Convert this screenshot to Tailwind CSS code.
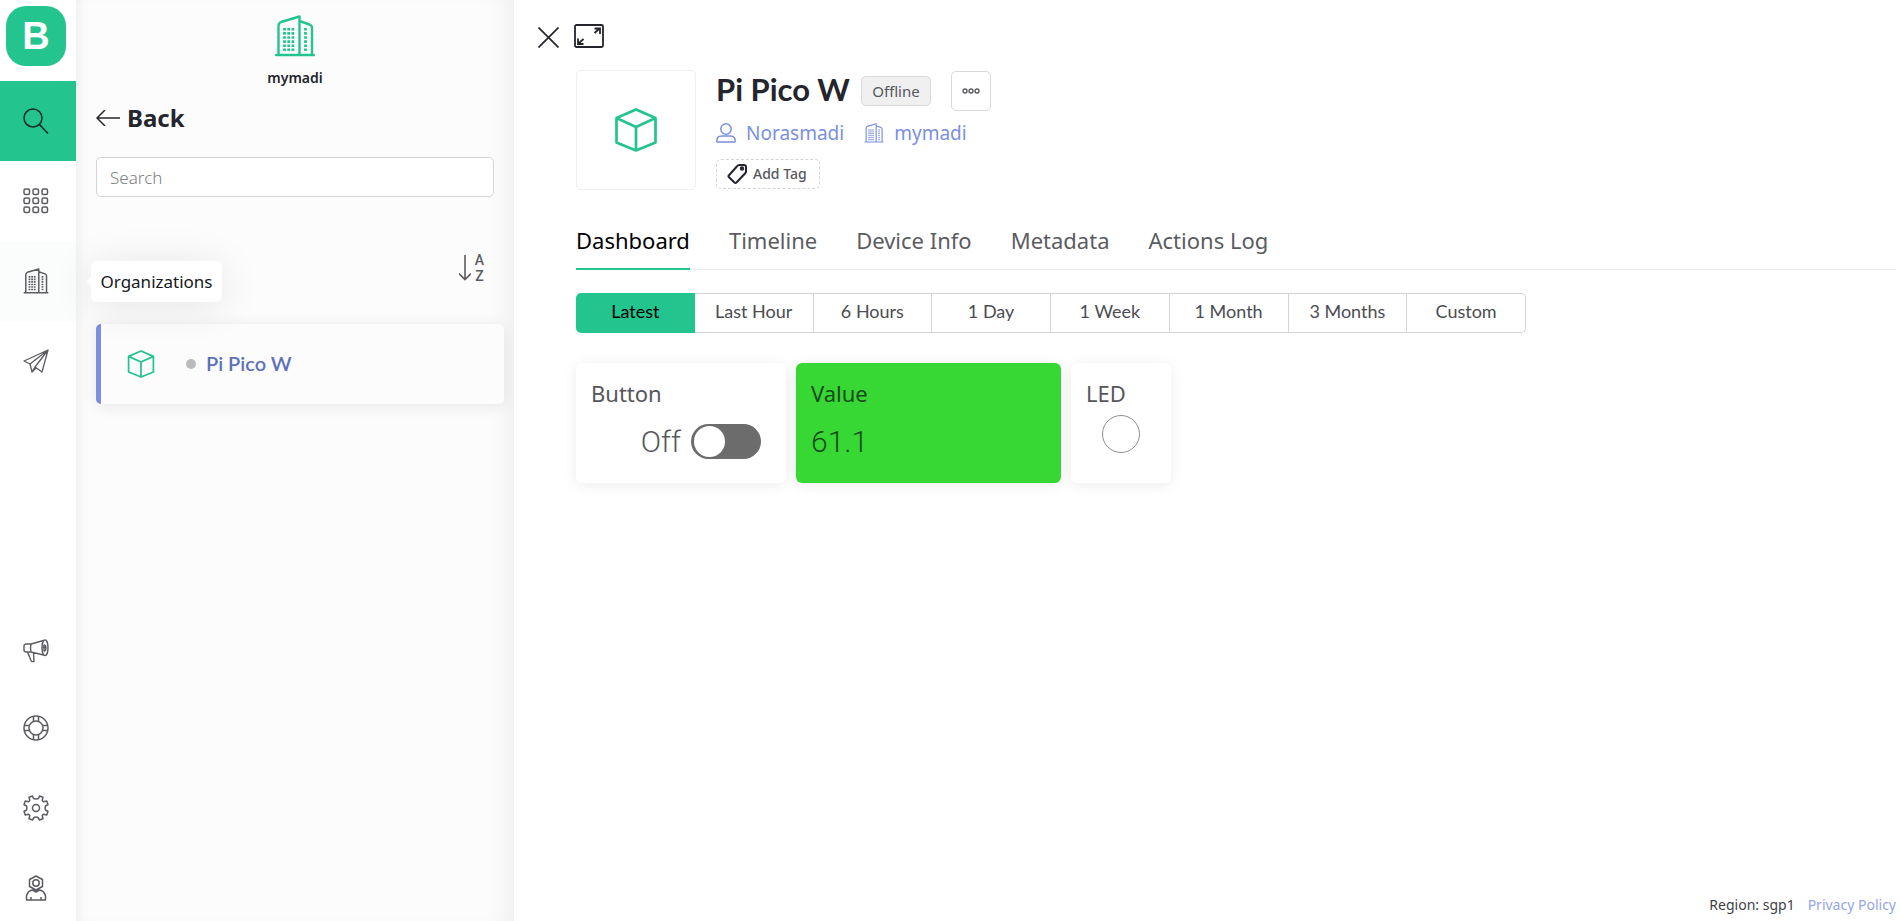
<!DOCTYPE html>
<html lang="en">
<head>
<meta charset="utf-8">
<title>Pi Pico W</title>
<script src="https://cdn.jsdelivr.net/npm/@tailwindcss/browser@4"></script>
</head>
<body class="bg-white font-['Noto_Sans',sans-serif] text-[#24252d]">
<svg class="hidden">
  <symbol id="cube" viewBox="0 0 42 44"><path d="M21 1.500 40.500 10v24.500L21 42.500 1.500 34.500V10ZM1.500 10 21 19l19.500-9M21 19v23.500" fill="none" stroke="currentColor" stroke-width="2.700" stroke-linejoin="round"/></symbol>
  <symbol id="building" viewBox="0 0 40 42"><path d="M3.500 40V11q0-3 2.500-4L24.500 1.500V40M24.500 6l10 3.500q2.500 1 2.500 3.500v27M1 40h38" fill="none" stroke="currentColor" stroke-width="2.400" stroke-linejoin="round" stroke-linecap="round"/><path d="M9.500 13v24M13.700 13v24M17.900 13v24M30.500 13v24" fill="none" stroke="currentColor" stroke-width="2.800" stroke-dasharray="2.600 1.500"/></symbol>
</svg>
<div class="flex min-h-screen">
  <nav class="relative z-10 flex w-19 shrink-0 flex-col bg-white text-[#5b5c61]" aria-label="Main">
    <a href="#" aria-label="Home" class="mt-[6px] ml-[6px] mb-[15px] flex size-[60px] items-center justify-center rounded-[20px] bg-[#24c48e] font-['Liberation_Sans',sans-serif] text-[38px] font-bold text-white">B</a>
    <a href="#" aria-label="Search" class="flex h-20 items-center bg-[#24c48e] pl-[23px] text-[#0c2b24]">
      <svg class="size-[26px]" viewBox="0 0 26 26" fill="none" stroke="currentColor" stroke-width="1.500"><circle cx="10" cy="10" r="9"/><path d="m16.500 16.500 8.500 9"/></svg>
    </a>
    <a href="#" aria-label="Templates" class="flex h-20 items-center pl-[23px]">
      <svg class="size-[26px]" viewBox="0 0 26 26" fill="none" stroke="currentColor" stroke-width="1.500"><rect x="1" y="1" width="5.500" height="5.500" rx="1.500"/><rect x="10" y="1" width="5.500" height="5.500" rx="1.500"/><rect x="19" y="1" width="5.500" height="5.500" rx="1.500"/><rect x="1" y="10" width="5.500" height="5.500" rx="1.500"/><rect x="10" y="10" width="5.500" height="5.500" rx="1.500"/><rect x="19" y="10" width="5.500" height="5.500" rx="1.500"/><rect x="1" y="19" width="5.500" height="5.500" rx="1.500"/><rect x="10" y="19" width="5.500" height="5.500" rx="1.500"/><rect x="19" y="19" width="5.500" height="5.500" rx="1.500"/></svg>
    </a>
    <a href="#" aria-label="Organizations" class="relative flex h-20 items-center bg-[#fafdfc] pl-[23px]">
      <svg class="size-[26px]"><use href="#building"/></svg>
      <span role="tooltip" class="absolute top-5 left-[91px] flex h-[41px] w-[131px] items-center justify-center rounded-md bg-white text-[17px] text-[#17181d] shadow-[0_4px_40px_rgba(0,0,0,0.10)]">Organizations<span class="absolute top-[17px] -left-[3px] size-[7px] rotate-45 bg-white"></span></span>
    </a>
    <a href="#" aria-label="Messages" class="flex h-20 items-center pl-[23px]">
      <svg class="size-[26px]" viewBox="0 0 26 26" fill="none" stroke="currentColor" stroke-width="1.300" stroke-linejoin="round"><path d="M25 2 1 13l6 3L25 2 19 24l-7-5L25 2M7 16l2 8 3-5M9 24l4-4M12 19 25 2"/></svg>
    </a>
    <div class="mt-auto flex flex-col gap-[54px] pb-5 pl-[23px]">
      <a href="#" aria-label="News" class="-mb-[3px]"><svg class="size-[26px]" viewBox="0 0 26 26" fill="none" stroke="currentColor" stroke-width="1.400" stroke-linejoin="round"><path d="M8 6 20.500 2.500M8 14l12.500 3M8 6H3.500Q1 6 1 8v4q0 2 2.500 2H8M8 6q-1 4 0 8M4.500 14 8 22.500q.5 1.500 3 1L10.500 15"/><ellipse cx="22" cy="9.700" rx="3" ry="7.800"/><path d="M21 7q2 0 2 3t-2 3ZM19.500 9.500h3"/></svg></a>
      <a href="#" aria-label="Help"><svg class="size-[26px]" viewBox="0 0 26 26" fill="none" stroke="currentColor" stroke-width="1.500"><circle cx="13" cy="13" r="12"/><circle cx="13" cy="13" r="7"/><path d="M10.500 1.500v5M15.500 1.500v5M10.500 19.500v5M15.500 19.500v5M1.500 10.500h5M1.500 15.500h5M19.500 10.500h5M19.500 15.500h5"/></svg></a>
      <a href="#" aria-label="Settings"><svg class="size-[26px]" viewBox="0 0 26 26" fill="none" stroke="currentColor" stroke-width="1.500" stroke-linejoin="round"><circle cx="13" cy="13" r="3.500"/><path d="M10.500 3.500 9.500 1 6 2.300l.8 3q-.6 1-1.500 1.500l-3-.8L1 9.500l2.500 1.500q.8 2 0 4L1 16.500 2.300 20l3-.8q1 .5 1.500 1.500l-.8 3L9.500 25l1.500-2.500q2-.8 4 0l1.500 2.500 3.500-1.300-.8-3q.5-1 1.500-1.500l3 .8 1.300-3.500-2.500-1.500q-.8-2 0-4L25 9.500 23.700 6l-3 .8q-1-.5-1.500-1.500l.8-3L16.500 1l-1 2.500q-2.500.8-5 0Z"/></svg></a>
      <a href="#" aria-label="Account"><svg class="size-[26px]" viewBox="0 0 26 26" fill="none" stroke="currentColor" stroke-width="1.500" stroke-linejoin="round"><path d="m13 1 6.500 3.500v7L13 15l-6.500-3.500v-7ZM3.500 25v-4q1-5 6-6l3.500 2 3.500-2q5 1 6 6v4ZM8 25v-3M18 25v-3"/><circle cx="13" cy="8" r="3.200"/></svg></a>
    </div>
  </nav>

  <aside class="flex w-[438px] shrink-0 flex-col bg-[#fcfcfc] pr-[10px] pl-5 shadow-[inset_12px_0_12px_-8px_rgba(0,0,0,0.05),inset_-20px_0_24px_-14px_rgba(0,0,0,0.06)]">
    <div class="flex flex-col items-center pt-[15px] pr-[10px]">
      <svg class="h-[42px] w-10 text-[#24c48e]"><use href="#building"/></svg>
      <span class="mt-[11px] text-sm leading-5 font-semibold">mymadi</span>
    </div>
    <a href="#" class="mt-[14px] flex h-8 items-center gap-[7px] text-2xl font-bold">
      <svg class="h-4 w-6" viewBox="0 0 24 16" fill="none" stroke="currentColor" stroke-width="1.500"><path d="M1 8h23M9 0 1 8l8 8"/></svg>Back
    </a>
    <input type="search" aria-label="Search" placeholder="Search" class="mt-[23px] mr-[10px] h-10 rounded-[5px] border border-[#d4d4d6] bg-white px-[13px] text-[17px] font-light placeholder:text-[#7d7e82]">
    <button type="button" aria-label="Sort A to Z" class="mt-[55px] mr-5 flex items-center gap-1 self-end text-[#5b5c61]">
      <svg class="h-[26px] w-3" viewBox="0 0 12 26" fill="none" stroke="currentColor" stroke-width="1.600"><path d="M6 0v24M0 18.500l6 6 6-6"/></svg>
      <span class="flex flex-col font-['Roboto',sans-serif] text-sm leading-4 font-medium"><span>A</span><span>Z</span></span>
    </button>
    <a href="#" class="mt-[40px] flex h-20 items-center rounded-[5px] border-l-5 border-[#7a8fe0] bg-[#fcfcfc] pl-[26px] font-['Lato',sans-serif] text-xl font-semibold text-[#5c72b8] shadow-[0_2px_16px_rgba(0,0,0,0.09)]">
      <svg class="size-7 text-[#24c48e]"><use href="#cube"/></svg>
      <span class="ml-[31px] size-[10px] rounded-full bg-[#bbbbbd]"></span>
      <span class="ml-[10px] pb-[2px]">Pi Pico W</span>
    </a>
  </aside>

  <main class="flex min-w-0 flex-1 flex-col">
    <div class="flex h-[70px] items-start gap-[15px] pt-6 pl-6">
      <button type="button" aria-label="Close" class="mt-[3px]"><svg class="size-[21px]" viewBox="0 0 21 21" fill="none" stroke="currentColor" stroke-width="1.700"><path d="m.5.5 20 20M20.500.5l-20 20"/></svg></button>
      <button type="button" aria-label="Full screen"><svg class="h-6 w-[30px]" viewBox="0 0 30 24" fill="none" stroke="currentColor" stroke-width="1.800"><rect x="1" y="1" width="28" height="22" rx="1.500"/><path d="m20.500 9 5-4.500M20.500 4.500H26V10M9.500 15l-5 4.500M4 14.500V20h5.500"/></svg></button>
    </div>
    <header class="flex gap-5 pl-[62px]">
      <div class="flex size-[120px] items-center justify-center rounded-[5px] border border-[#eeeeef] text-[#24c48e]"><svg class="h-11 w-[42px]"><use href="#cube"/></svg></div>
      <div class="flex flex-col items-start">
        <div class="flex h-[42px] items-center">
          <h1 class="pb-[3px] font-['Lato',sans-serif] text-[31px] font-bold">Pi Pico W</h1>
          <span class="ml-[11px] flex h-[30px] w-[70px] items-center justify-center rounded-[5px] border border-[#d8d8da] bg-[#f0f0f0] text-[15px] text-[#56575c]">Offline</span>
          <button type="button" aria-label="More" class="ml-5 flex size-10 items-center justify-center rounded-[5px] border border-[#d8d8da] text-[#5b5c61]"><svg class="h-[6px] w-[18px]" viewBox="0 0 18 6" fill="none" stroke="currentColor" stroke-width="1.400"><circle cx="3" cy="3" r="2"/><circle cx="9" cy="3" r="2"/><circle cx="15" cy="3" r="2"/></svg></button>
        </div>
        <div class="mt-[5px] flex h-8 items-center text-[19px] text-[#7a8fe0]">
          <a href="#" class="flex items-center gap-[10px]"><svg class="size-5" viewBox="0 0 20 20" fill="none" stroke="currentColor" stroke-width="1.500"><circle cx="10" cy="6" r="5.200"/><path d="M1 19q-1-6 5-6h8q6 0 5 6Z" stroke-linejoin="round"/></svg>Norasmadi</a>
          <a href="#" class="ml-5 flex items-center gap-[10px]"><svg class="size-5"><use href="#building"/></svg>mymadi</a>
        </div>
        <button type="button" class="mt-[10px] flex h-[30px] w-[104px] items-center gap-[6px] rounded-[5px] border border-dashed border-[#d4d4d6] pl-[10px] text-sm font-medium text-[#56575c]"><svg class="size-5 shrink-0 text-[#24252d]" viewBox="0 0 20 20" fill="none" stroke="currentColor" stroke-width="2" stroke-linejoin="round"><path d="m1.800 11.500 8-9Q11 1 12.500 1H17q2 0 2 2v4.500q0 1-1 2l-8.500 9q-1 1-2 0l-5.700-5.500q-.7-.7 0-1.500Z"/><circle cx="15" cy="4.500" r="1.200"/></svg>Add Tag</button>
      </div>
    </header>
    <nav aria-label="Device" class="mt-7 mr-1 ml-[62px] flex h-[52px] gap-[39px] border-b border-[#eaeaeb] text-[22px] text-[#5b5c61]">
      <a href="#" aria-current="page" class="-mb-px flex items-center border-b-2 border-[#24c48e] pb-[5px] text-black">Dashboard</a>
      <a href="#" class="flex items-center pb-[6px]">Timeline</a>
      <a href="#" class="flex items-center pb-[6px]">Device Info</a>
      <a href="#" class="flex items-center pb-[6px]">Metadata</a>
      <a href="#" class="flex items-center pb-[6px]">Actions Log</a>
    </nav>
    <div class="mt-[23px] ml-[62px] grid h-10 w-[950px] grid-cols-8 font-['Lato',sans-serif] text-lg text-[#4b4c51]">
      <button type="button" class="rounded-l-[5px] bg-[#24c48e] pb-1 text-black">Latest</button>
      <button type="button" class="border-y border-r border-[#d4d4d6] pb-1">Last Hour</button>
      <button type="button" class="border-y border-r border-[#d4d4d6] pb-1">6 Hours</button>
      <button type="button" class="border-y border-r border-[#d4d4d6] pb-1">1 Day</button>
      <button type="button" class="border-y border-r border-[#d4d4d6] pb-1">1 Week</button>
      <button type="button" class="border-y border-r border-[#d4d4d6] pb-1">1 Month</button>
      <button type="button" class="border-y border-r border-[#d4d4d6] pb-1">3 Months</button>
      <button type="button" class="rounded-r-[5px] border-y border-r border-[#d4d4d6] pb-1">Custom</button>
    </div>
    <section class="mt-[30px] ml-[62px] flex gap-[10px] text-[#56575c]">
      <div class="h-[120px] w-[210px] rounded-[6px] bg-white px-[15px] pt-[15px] shadow-[0_2px_14px_rgba(0,0,0,0.08)]">
        <h2 class="text-[22px] leading-[30px]">Button</h2>
        <label class="mt-4 mr-[10px] flex h-[35px] items-center justify-end gap-[10px]">
          <span class="font-['Roboto',sans-serif] text-[30px] font-light">Off</span>
          <input type="checkbox" role="switch" class="h-[35px] w-[70px] appearance-none rounded-full bg-[#6c6c6c] px-[3px] py-[2px] before:block before:size-[31px] before:rounded-full before:bg-white before:content-['']">
        </label>
      </div>
      <div class="h-[120px] w-[265px] rounded-[6px] bg-[#38d834] px-[15px] pt-[15px] text-[#174a1b] shadow-[0_2px_14px_rgba(0,0,0,0.08)]">
        <h2 class="text-[22px] leading-[30px]">Value</h2>
        <p class="mt-4 font-['Roboto',sans-serif] text-[30px] leading-[35px] font-light">61.1</p>
      </div>
      <div class="h-[120px] w-[100px] rounded-[6px] bg-white px-[15px] pt-[15px] shadow-[0_2px_14px_rgba(0,0,0,0.08)]">
        <h2 class="text-[22px] leading-[30px]">LED</h2>
        <div class="mx-auto mt-[7px] size-[38px] rounded-full border border-[#8f8f91]"></div>
      </div>
    </section>
    <footer class="mt-auto flex justify-end gap-[13px] pr-1 pb-[6px] text-sm text-[#3f4046]"><span>Region: sgp1</span><a href="#" class="text-[#94a5e8]">Privacy Policy</a></footer>
  </main>
</div>
</body>
</html>
